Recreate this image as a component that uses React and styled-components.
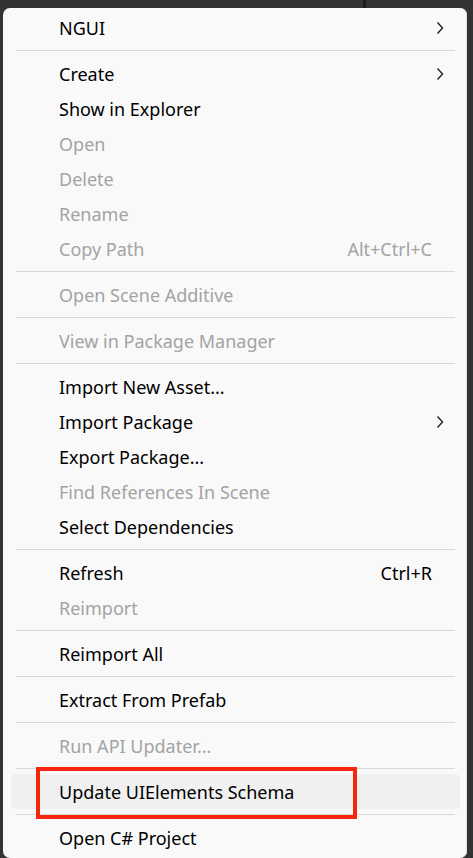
import React from "react";
import styled, { createGlobalStyle } from "styled-components";

const Global = createGlobalStyle`
  html, body { margin: 0; padding: 0; }
  body {
    width: 473px;
    height: 858px;
    overflow: hidden;
    background:
      linear-gradient(to right, transparent 363px, #1c1c1c 363px, #1c1c1c 366px, transparent 366px) top / 100% 8px no-repeat,
      #333333;
    font-family: "Noto Sans", "Open Sans", sans-serif;
  }
`;

const Page = styled.div`
  padding: 8px 6px 0 3px;
`;

const Menu = styled.div`
  position: relative;
  width: 464px;
  box-sizing: border-box;
  background: #f9f9f9;
  border-radius: 7px;
  padding: 2px 0 3px;
  box-shadow: inset -1px 0 0 #e4e4e4;
`;

const Item = styled.div`
  height: 35px;
  margin: 0 7px 0 8px;
  border-radius: 5px;
  display: flex;
  align-items: center;
  padding: 0 14px 0 48px;
  font-size: 18px;
  color: ${(p) => (p.$disabled ? "#a3a3a3" : "#000")};
  background: ${(p) => (p.$hover ? "#f0f0f0" : "transparent")};
  white-space: nowrap;
`;

const Label = styled.span`
  flex: 1;
`;

const Shortcut = styled.span`
  margin-right: 14px;
`;

const Chevron = styled.svg`
  width: 8px;
  height: 14px;
  margin-left: auto;
  margin-right: 2px;
`;

const Sep = styled.div`
  height: 11px;
  display: flex;
  align-items: center;
  padding: 0 12px 0 13px;
  &::after {
    content: "";
    flex: 1;
    height: 1px;
    background: #d8d8d8;
  }
`;

const Highlight = styled.div`
  position: absolute;
  left: 33px;
  top: 759px;
  width: 321px;
  height: 52px;
  box-sizing: border-box;
  border: 4px solid #f5260e;
  pointer-events: none;
`;

const items = [
  { label: "NGUI", sub: true },
  "sep",
  { label: "Create", sub: true },
  { label: "Show in Explorer" },
  { label: "Open", disabled: true },
  { label: "Delete", disabled: true },
  { label: "Rename", disabled: true },
  { label: "Copy Path", disabled: true, shortcut: "Alt+Ctrl+C" },
  "sep",
  { label: "Open Scene Additive", disabled: true },
  "sep",
  { label: "View in Package Manager", disabled: true },
  "sep",
  { label: "Import New Asset..." },
  { label: "Import Package", sub: true },
  { label: "Export Package..." },
  { label: "Find References In Scene", disabled: true },
  { label: "Select Dependencies" },
  "sep",
  { label: "Refresh", shortcut: "Ctrl+R" },
  { label: "Reimport", disabled: true },
  "sep",
  { label: "Reimport All" },
  "sep",
  { label: "Extract From Prefab" },
  "sep",
  { label: "Run API Updater...", disabled: true },
  "sep",
  { label: "Update UIElements Schema", hover: true },
  "sep",
  { label: "Open C# Project" },
];

export default function App() {
  return (
    <Page>
      <Global />
      <Menu>
        {items.map((it, i) =>
          it === "sep" ? (
            <Sep key={i} />
          ) : (
            <Item key={i} $disabled={it.disabled} $hover={it.hover}>
              <Label>{it.label}</Label>
              {it.shortcut && <Shortcut>{it.shortcut}</Shortcut>}
              {it.sub && (
                <Chevron viewBox="0 0 8 14">
                  <path d="M1.5 1.5 L6.5 7 L1.5 12.5" fill="none" stroke="#222" strokeWidth="1.4" />
                </Chevron>
              )}
            </Item>
          )
        )}
        <Highlight />
      </Menu>
    </Page>
  );
}
